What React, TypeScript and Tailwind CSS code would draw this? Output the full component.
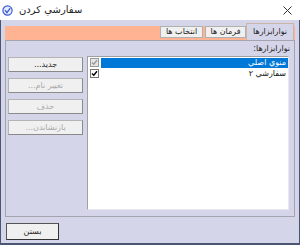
import React from "react";

const font = { fontFamily: '"DejaVu Sans", sans-serif' };

const SideButton = ({ label, disabled }: { label: string; disabled?: boolean }) => (
  <div
    className={
      "h-[15px] w-[75px] flex items-center justify-center bg-[#f0f0f0] border border-[#b4b4b4] border-r-[#8a8a8a] border-b-[#8a8a8a] text-[8px] leading-none " +
      (disabled ? "text-[#a8a8a8]" : "text-[#222]")
    }
    dir="rtl"
  >
    {label}
  </div>
);

const CheckBox = ({ checked, disabled }: { checked?: boolean; disabled?: boolean }) => (
  <div
    className={
      "w-[9px] h-[9px] border flex items-center justify-center " +
      (disabled ? "border-[#9a9a9a] bg-[#e6e6e6]" : "border-[#777] bg-white")
    }
  >
    {checked && (
      <svg width="7" height="7" viewBox="0 0 7 7">
        <path d="M1 3.5 L2.8 5.3 L6 1.2" fill="none" stroke={disabled ? "#9a9a9a" : "#000"} strokeWidth="1.4" />
      </svg>
    )}
  </div>
);

export default function App() {
  return (
    <div className="w-[300px] h-[245px] flex flex-col bg-[#d5d5e9]" style={font}>
      {/* Title bar */}
      <div className="h-[20px] bg-white flex items-center pl-[2px] pr-[8px]">
        <svg width="11" height="11" viewBox="0 0 11 11">
          <circle cx="5.5" cy="5.5" r="4.6" fill="#e8ecff" stroke="#3b5bd6" strokeWidth="1.2" />
          <path d="M3 5.2 L5 7.6 L8.2 3.2" fill="none" stroke="#3b5bd6" strokeWidth="1.3" />
        </svg>
        <span className="ml-[6px] text-[10px] text-[#222] leading-none" dir="rtl">
          سفارشي كردن
        </span>
        <div className="flex-1" />
        <svg width="9" height="9" viewBox="0 0 9 9">
          <path d="M0.5 0.5 L8.5 8.5 M8.5 0.5 L0.5 8.5" stroke="#333" strokeWidth="1" />
        </svg>
      </div>

      {/* Body */}
      <div className="flex-1 flex flex-col border-l border-r border-b-2 border-[#4a5573] px-[4px]">
        {/* Tab strip */}
        <div className="mt-[6px] h-[14px] bg-[#ffb393] flex flex-row-reverse items-end pr-[1px] relative z-10">
          <div
            className="h-[17px] w-[48px] bg-[#d5d5e9] border border-b-0 border-[#c9b6a8] flex items-center justify-center text-[8px] text-[#222] leading-none"
            dir="rtl"
          >
            نوارابزارها
          </div>
          <div
            className="mb-[2px] ml-[2px] h-[12px] w-[41px] bg-[#f0f0f0] border border-[#b0b0b0] flex items-center justify-center text-[8px] text-[#222] leading-none"
            dir="rtl"
          >
            فرمان ها
          </div>
          <div
            className="mb-[2px] ml-[2px] h-[12px] w-[43px] bg-[#f0f0f0] border border-[#b0b0b0] flex items-center justify-center text-[8px] text-[#222] leading-none"
            dir="rtl"
          >
            انتخاب ها
          </div>
        </div>

        {/* Tab panel */}
        <div className="h-[177px] border border-[#a4a4b0] flex flex-col">
          <div className="h-[15px] flex items-center justify-end pr-[4px] text-[8px] text-[#222] leading-none">
            <span dir="rtl">نوارابزارها:</span>
          </div>
          <div className="flex">
            <div className="ml-[2px] mt-[1px] flex flex-col gap-[6px]">
              <SideButton label="جديد..." />
              <SideButton label="تغيير نام..." disabled />
              <SideButton label="حذف" disabled />
              <SideButton label="بازنشاندن..." disabled />
            </div>
            <div className="ml-[4px] mr-[5px] flex-1 h-[154px] bg-white border border-[#a0a0a0] border-r-[#e8e8ee] border-b-[#e8e8ee] pl-[2px] pt-[1px] flex flex-col gap-[1px]">
              <div className="flex items-center h-[9px] gap-[2px]">
                <CheckBox checked disabled />
                <div className="flex-1 h-[10px] bg-[#0078d7] text-white text-[8px] leading-none flex items-center pr-[2px]" dir="rtl">
                  منوي اصلي
                </div>
              </div>
              <div className="flex items-center h-[9px] gap-[2px] mt-[1px]">
                <CheckBox checked />
                <div className="flex-1 h-[10px] text-[#111] text-[8px] leading-none flex items-center pr-[2px]" dir="rtl">
                  سفارشي ٢
                </div>
              </div>
            </div>
          </div>
        </div>

        {/* Footer */}
        <div className="mt-[6px] flex">
          <div
            className="ml-[1px] h-[17px] w-[53px] bg-[#f0f0f0] border border-[#555] border-r-[#333] border-b-[#333] flex items-center justify-center text-[8px] text-[#222] leading-none"
            dir="rtl"
          >
            بستن
          </div>
        </div>
      </div>
    </div>
  );
}
